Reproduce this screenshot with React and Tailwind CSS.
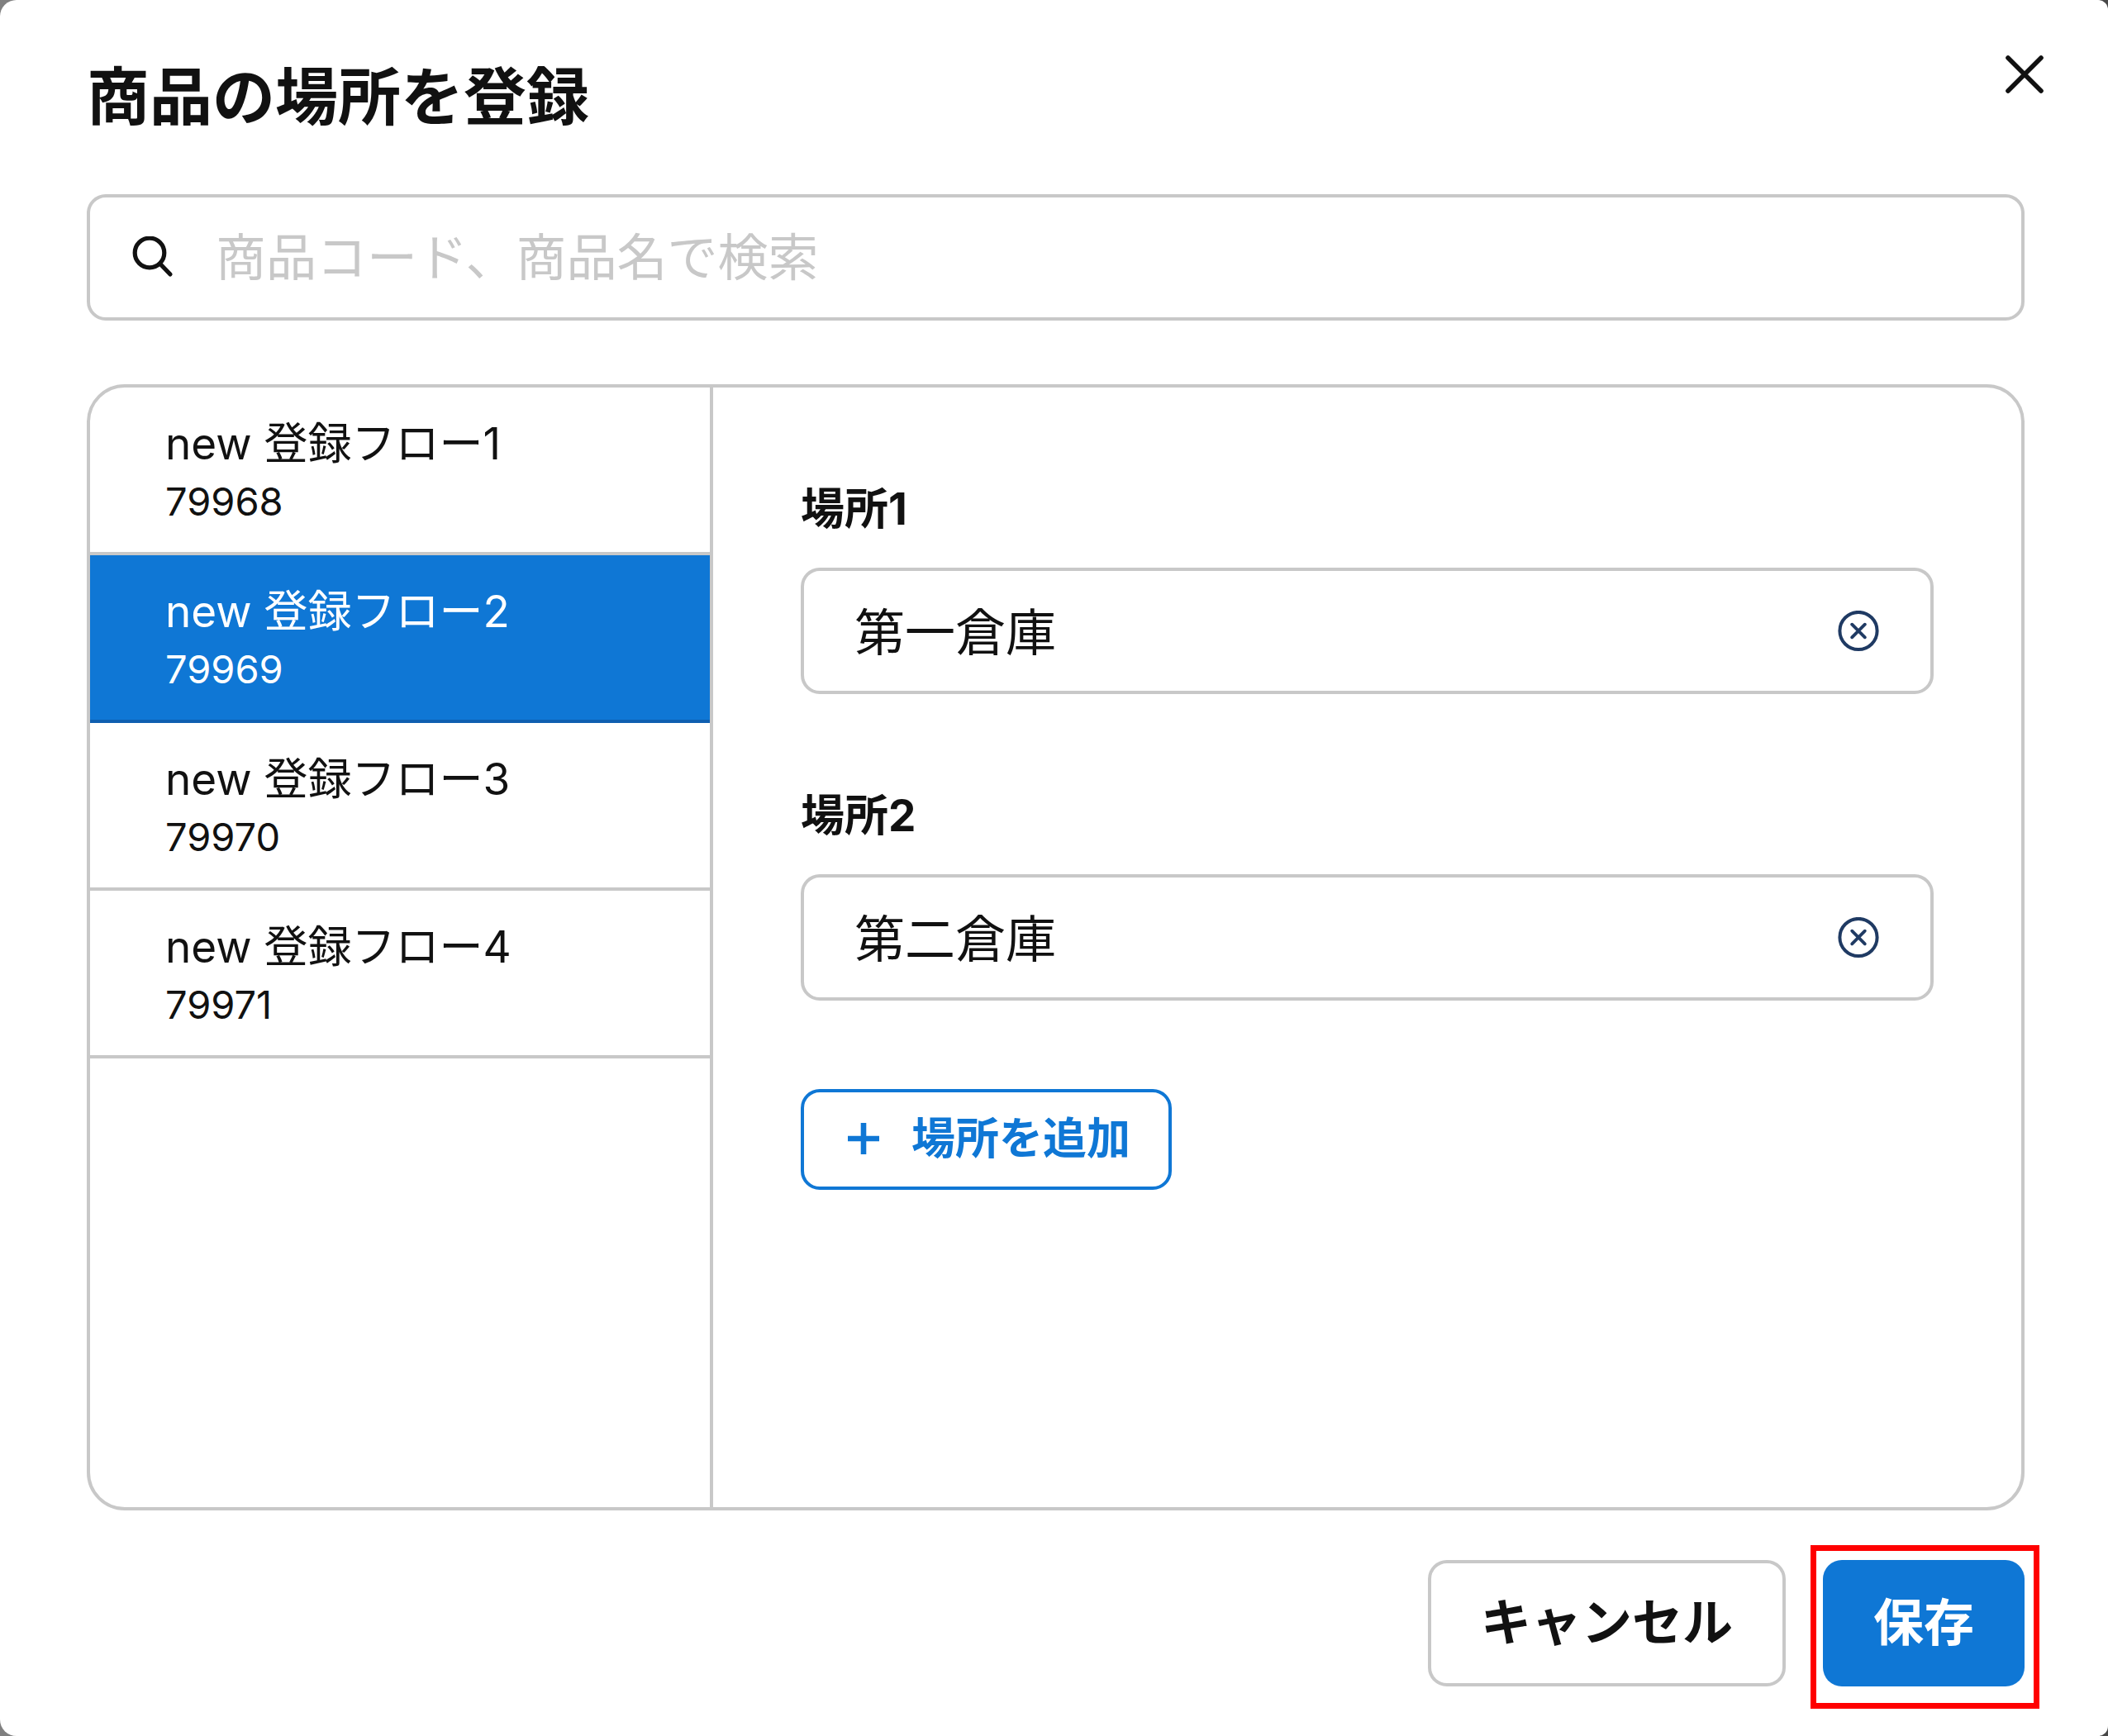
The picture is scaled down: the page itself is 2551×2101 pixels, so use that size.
import React, { useState } from 'react'

const products = [
  { code: '79968', name: 'new 登録フロー1' },
  { code: '79969', name: 'new 登録フロー2' },
  { code: '79970', name: 'new 登録フロー3' },
  { code: '79971', name: 'new 登録フロー4' },
]

function SearchIcon() {
  return (
    <svg className="w-[52px] h-[52px] shrink-0" viewBox="0 0 52 52" fill="none" stroke="#111" strokeWidth="5.2" strokeLinecap="round" aria-hidden="true">
      <circle cx="22" cy="20" r="17.8" />
      <path d="M34.5 33 L47 46" />
    </svg>
  )
}

function CloseIcon() {
  return (
    <svg className="w-[60px] h-[60px]" viewBox="0 0 60 60" fill="none" stroke="#111" strokeWidth="5.6" strokeLinecap="round" aria-hidden="true">
      <path d="M10 10 L50 50 M50 10 L10 50" />
    </svg>
  )
}

function ClearIcon() {
  return (
    <svg className="w-[50px] h-[50px]" viewBox="0 0 50 50" fill="none" stroke="#1f3a63" strokeWidth="4" strokeLinecap="round" aria-hidden="true">
      <circle cx="25" cy="24.5" r="22.6" />
      <path d="M17.2 16.7 L32.8 32.3 M32.8 16.7 L17.2 32.3" strokeWidth="3.8" />
    </svg>
  )
}

function PlusIcon() {
  return (
    <svg className="w-[40px] h-[40px]" viewBox="0 0 40 40" fill="none" stroke="currentColor" strokeWidth="6.6" aria-hidden="true">
      <path d="M20 0 V38 M1 19 H39" />
    </svg>
  )
}

function PlaceField({ index, value, onChange }) {
  const id = `place-${index}`
  return (
    <div className="flex flex-col gap-[31px]">
      <label htmlFor={id} className="text-[53px] leading-[80px] font-bold">
        場所{index}
      </label>
      <div className="h-[153px] flex items-center gap-6 pl-[61px] pr-[62px] border-4 border-[#c8c8c8] rounded-[23px]">
        <input
          id={id}
          type="text"
          value={value}
          onChange={(e) => onChange(e.target.value)}
          className="flex-1 min-w-0 h-full pb-1 text-[61px] bg-transparent outline-none"
        />
        <button type="button" aria-label="クリア" onClick={() => onChange('')}>
          <ClearIcon />
        </button>
      </div>
    </div>
  )
}

export default function App() {
  const [keyword, setKeyword] = useState('')
  const [selected, setSelected] = useState('79969')
  const [places, setPlaces] = useState(['第一倉庫', '第二倉庫'])

  const updatePlace = (i, value) => {
    setPlaces(places.map((p, n) => (n === i ? value : p)))
  }

  return (
    <div className="min-h-screen flex bg-linear-to-r from-[#808080] to-[#484848] font-['Inter','Noto_Sans_CJK_JP',sans-serif] text-[#111]">
      <div role="dialog" aria-labelledby="dialog-title" className="flex-1 flex flex-col pt-[60px] pb-[60px] pl-[105px] pr-[101px] bg-white rounded-l-[20px] rounded-r-[12px]">
        <header className="flex items-start justify-between mb-[61px]">
          <h1 id="dialog-title" className="text-[76px] leading-[114px] font-bold">商品の場所を登録</h1>
          <button type="button" aria-label="閉じる" className="-mr-[30px]">
            <CloseIcon />
          </button>
        </header>

        {/* Search */}
        <label className="h-[153px] flex items-center gap-[50px] px-[50px] mb-[77px] border-4 border-[#c8c8c8] rounded-[23px]">
          <SearchIcon />
          <input
            type="search"
            value={keyword}
            onChange={(e) => setKeyword(e.target.value)}
            placeholder="商品コード、商品名で検索"
            className="flex-1 min-w-0 h-full text-[61px] bg-transparent outline-none placeholder:text-[#c8c8c8]"
          />
        </label>

        {/* Products and their places */}
        <div className="flex-1 flex mb-[60px] border-4 border-[#c8c8c8] rounded-[46px] overflow-hidden">
          <ul className="w-[754px] shrink-0 border-r-4 border-[#c8c8c8]">
            {products.map((p) => (
              <li key={p.code}>
                <button
                  type="button"
                  onClick={() => setSelected(p.code)}
                  className={`w-full flex flex-col items-start pl-[91px] pt-[32px] pb-[27px] border-b-4
                    ${selected === p.code
                      ? 'bg-[#0f77d5] border-[#0f5fb0] text-white'
                      : 'border-[#c8c8c8]'}`}
                >
                  <span className="text-[53px] leading-[72px]">{p.name}</span>
                  <span className="text-[47px] leading-[68px]">{p.code}</span>
                </button>
              </li>
            ))}
          </ul>

          <div className="flex-1 min-w-0 flex flex-col items-stretch gap-[107px] pt-[107px] px-[106px]">
            {places.map((place, i) => (
              <PlaceField key={i} index={i + 1} value={place} onChange={(v) => updatePlace(i, v)} />
            ))}
            <button
              type="button"
              onClick={() => setPlaces([...places, ''])}
              className="self-start h-[122px] flex items-center gap-[38px] pl-[52px] pr-[46px] border-4 border-[#0f77d5] rounded-[23px] text-[53px] font-bold text-[#0f77d5]"
            >
              <PlusIcon />
              場所を追加
            </button>
          </div>
        </div>

        <footer className="flex justify-end gap-[45px]">
          <button type="button" className="h-[153px] px-[60px] border-4 border-[#c8c8c8] rounded-[23px] text-[61px] font-bold">
            キャンセル
          </button>
          <div className="relative">
            <button type="button" className="h-[153px] px-[61px] rounded-[23px] bg-[#0f77d5] text-[61px] font-bold text-white">
              保存
            </button>
            <div className="absolute -top-[18px] -bottom-[27px] -left-[15px] -right-[18px] border-[7px] border-[#f00] pointer-events-none" />
          </div>
        </footer>
      </div>
    </div>
  )
}
